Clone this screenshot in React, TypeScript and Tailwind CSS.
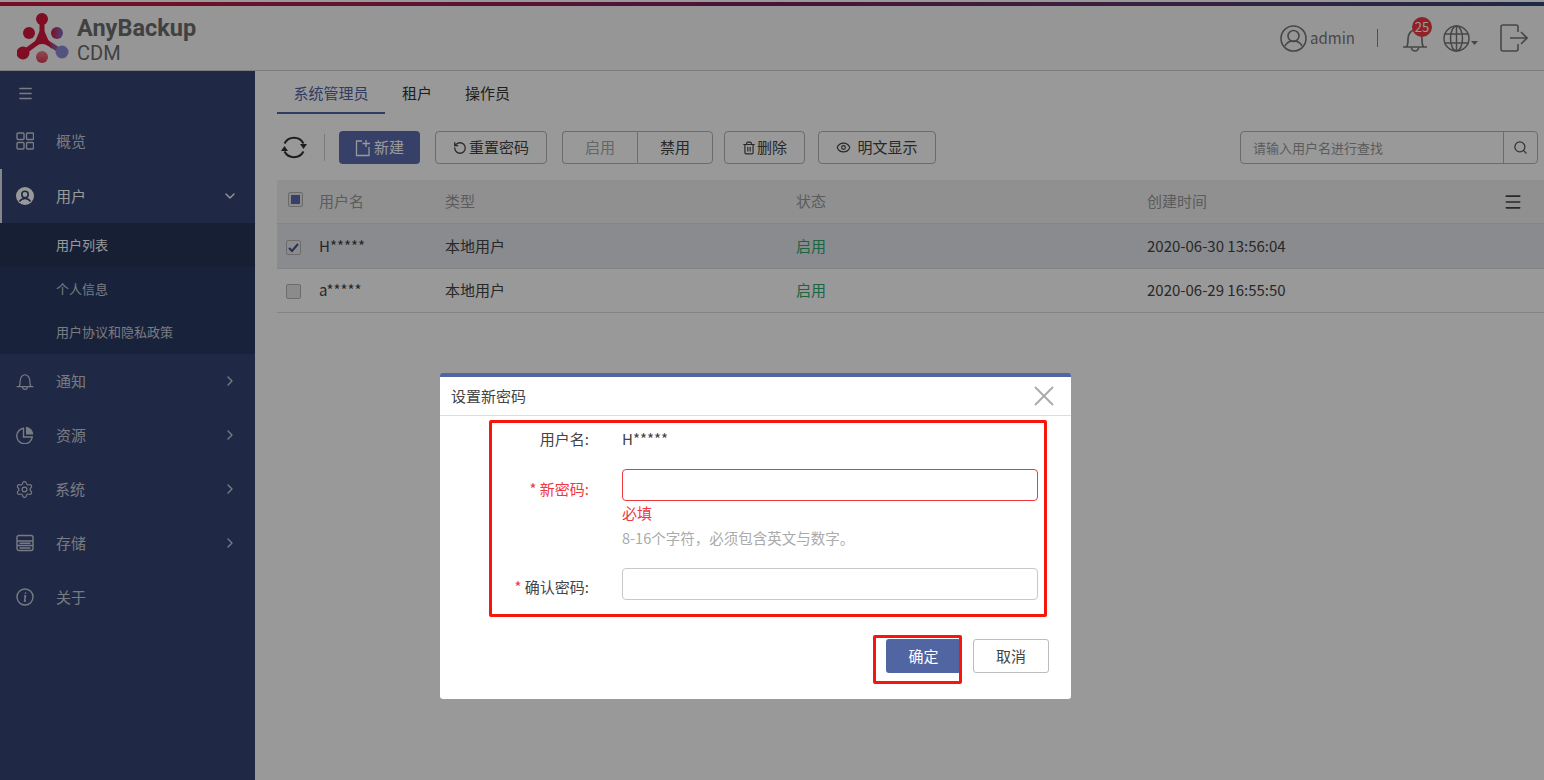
import { ChevronDown, ChevronRight, Eye, Menu, RotateCcw, Search, Settings, Trash2 } from "lucide-react";

const cjk = "font-['Noto_Sans_CJK_SC','Noto_Sans',sans-serif]";

function BellIcon({ size }: { size: number }) {
  return (
    <svg width={size} height={size} viewBox="0 0 26 26" fill="none" stroke="currentColor" strokeWidth="1.7">
      <path d="M1 21h24M4.500 21c1.500-2 1.500-4 1.500-8 0-5 3-9 7-9s7 4 7 9c0 4 0 6 1.500 8" />
      <path d="M9.500 21.500a3.500 3.500 0 0 0 7 0" />
    </svg>
  );
}

function PieIcon() {
  return (
    <svg width="18" height="18" viewBox="0 0 18 18" fill="none" stroke="currentColor" strokeWidth="1.4">
      <path d="M7.500 2.200A7.800 7.800 0 1 0 16.300 11H7.500z" />
      <path d="M10 0.800A8 8 0 0 1 17.200 8.500H10z" fill="currentColor" stroke="none" />
    </svg>
  );
}

const menus = [
  { name: "通知", icon: <BellIcon size={18} /> },
  { name: "资源", icon: <PieIcon /> },
  { name: "系统", icon: <Settings size={19} strokeWidth={1.5} className="-ml-px -mr-px" /> },
  { name: "存储", icon: <StorageIcon /> },
];

function StorageIcon() {
  return (
    <svg width="18" height="18" viewBox="0 0 18 18" fill="none" stroke="currentColor" strokeWidth="1.4">
      <rect x="1" y="1.500" width="16" height="15" rx="2" />
      <path d="M1 7h16M1 11.500h16M3.500 9.200h11M3.500 14h11" />
    </svg>
  );
}

function Logo() {
  return (
    <svg className="mt-[4px]" width="54" height="54" viewBox="0 0 54 54">
      <defs>
        <linearGradient id="lg-r" x1="0" y1="0" x2="1" y2="0">
          <stop offset="0" stopColor="#d4163c" />
          <stop offset="1" stopColor="#7d73c9" />
        </linearGradient>
        <linearGradient id="lg-b" x1="0" y1="0" x2="0" y2="1">
          <stop offset="0" stopColor="#ee7d8c" />
          <stop offset="1" stopColor="#d93a58" />
        </linearGradient>
      </defs>
      <path d="M25 6 L25 26 L6 40" stroke="#d4163c" strokeWidth="5" fill="none" />
      <path d="M25 26 L45 39" stroke="url(#lg-r)" strokeWidth="5" fill="none" />
      <path d="M15 36 Q24 14 25 14 Q26 14 35 36 Q25 26 15 36 Z" fill="#d4163c" />
      <circle cx="25" cy="6" r="6" fill="#d4163c" />
      <circle cx="12" cy="20" r="6" fill="#d4163c" />
      <circle cx="40" cy="20" r="6" fill="url(#lg-r)" />
      <circle cx="6" cy="40" r="6.500" fill="#d4163c" />
      <circle cx="25" cy="44" r="6" fill="url(#lg-b)" />
      <circle cx="45" cy="39" r="6.500" fill="#8a8ad6" />
    </svg>
  );
}

function Sidebar() {
  return (
    <aside className="flex w-[255px] shrink-0 flex-col bg-[#344574] text-[15px] text-[#c9cdd8]">
      <div className="flex h-[44px] items-center pl-[17px]">
        <Menu size={17} strokeWidth={2} />
      </div>
      <div className="flex h-[54px] items-center pb-[2px] pl-[16px]">
        <svg width="18" height="18" viewBox="0 0 18 18" fill="none" stroke="currentColor" strokeWidth="1.4">
          <rect x="1" y="1" width="7" height="6.500" rx="1" />
          <rect x="10.500" y="1" width="7" height="6.500" rx="1" />
          <rect x="1" y="10.500" width="7" height="6.500" rx="1" />
          <rect x="10.500" y="10.500" width="7" height="6.500" rx="1" />
        </svg>
        <span className="ml-[22px]">概览</span>
      </div>
      <div className="flex h-[54px] items-center border-l-2 border-[#dfe2ea] pl-[14px] pr-[17px] text-white">
        <svg width="18" height="18" viewBox="0 0 18 18">
          <circle cx="9" cy="9" r="9" fill="currentColor" />
          <circle cx="9" cy="7.500" r="3.200" fill="none" stroke="#344574" strokeWidth="1.600" />
          <path d="M3.500 14.500c1.500-2.500 3.500-3 5.500-3s4 .5 5.500 3" fill="none" stroke="#344574" strokeWidth="1.600" />
        </svg>
        <span className="ml-[22px]">用户</span>
        <ChevronDown size={16} className="ml-auto" />
      </div>
      <div className="bg-[#2b3a63] text-[13px]">
        <div className="flex h-[44px] items-center bg-[#263457] pl-[56px] text-white">用户列表</div>
        <div className="flex h-[43px] items-center pl-[56px]">个人信息</div>
        <div className="flex h-[44px] items-center pb-[1px] pl-[56px]">用户协议和隐私政策</div>
      </div>
      {menus.map((m) => (
        <div key={m.name} className="flex h-[54px] items-center pl-[16px] pr-[17px]">
          {m.icon}
          <span className="ml-[22px]">{m.name}</span>
          <ChevronRight size={16} className="ml-auto" />
        </div>
      ))}
      <div className="flex h-[54px] items-center pl-[16px]">
        <svg width="18" height="18" viewBox="0 0 18 18" fill="none" stroke="currentColor" strokeWidth="1.400">
          <circle cx="9" cy="9" r="8" />
          <path d="M9.500 4.500v1.500M8 8h1.500L8.500 13H10" />
        </svg>
        <span className="ml-[22px]">关于</span>
      </div>
    </aside>
  );
}

function TopBar() {
  return (
    <header className="flex h-[65px] items-center border-b border-[#d0d0d0] bg-[#fbfbfb] pl-[17px] pr-[16px]">
      <Logo />
      <div className="ml-[6px] mt-[4px] flex flex-col font-['Roboto',sans-serif] text-[#6d6d6d]">
        <span className="text-[23.5px] leading-[26px] font-bold">AnyBackup</span>
        <span className="text-[20px] leading-[24px]">CDM</span>
      </div>
      <div className="ml-auto flex items-center text-[#777]">
        <svg width="27" height="27" viewBox="0 0 27 27" fill="none" stroke="currentColor" strokeWidth="1.600">
          <circle cx="13.500" cy="13.500" r="12.500" />
          <circle cx="13.500" cy="11" r="5.500" />
          <path d="M5 21c2-4 5-5 8.500-5s6.500 1 8.500 5" />
        </svg>
        <span className={`ml-[3px] text-[15px] ${cjk}`}>admin</span>
        <div className="ml-[22px] h-[18px] w-px bg-[#888]" />
        <div className="relative ml-[24px] mt-[2px]">
          <BellIcon size={26} />
          <span className={`absolute -top-[9px] left-[10px] flex h-[20px] w-[20px] items-center justify-center rounded-full bg-[#f0383f] text-[13px] text-white ${cjk}`}>25</span>
        </div>
        <svg className="ml-[15px]" width="27" height="27" viewBox="0 0 27 27" fill="none" stroke="currentColor" strokeWidth="1.500">
          <circle cx="13.500" cy="13.500" r="12.500" />
          <ellipse cx="13.500" cy="13.500" rx="6" ry="12.500" />
          <path d="M13.500 1v25M2 9h23M2 18h23" />
        </svg>
        <svg className="mt-[10px]" width="9" height="5" viewBox="0 0 9 5"><path d="M1 0h7L4.500 4z" fill="currentColor" /></svg>
        <svg className="ml-[21px]" width="28" height="28" viewBox="0 0 28 28" fill="none" stroke="currentColor" strokeWidth="1.600">
          <path d="M18 8V3a2 2 0 0 0-2-2H3a2 2 0 0 0-2 2v22a2 2 0 0 0 2 2h13a2 2 0 0 0 2-2v-5" />
          <path d="M10 14h17M21 8l6 6-6 6" />
        </svg>
      </div>
    </header>
  );
}

function Btn({ children, className = "" }: { children: React.ReactNode; className?: string }) {
  return (
    <button className={`flex h-[33px] items-center justify-center rounded-[4px] border border-[#b4b4b4] bg-white text-[15px] text-[#444] ${className}`}>
      {children}
    </button>
  );
}

function SyncIcon() {
  return (
    <svg className="ml-[4px] text-[#333]" width="26" height="27" viewBox="0 0 26 27" fill="none" stroke="currentColor" strokeWidth="2">
      <path d="M3.500 9.500A10.800 10.800 0 0 1 22.500 9.500" />
      <path d="M22.500 17.500A10.800 10.800 0 0 1 3.500 17.500" />
      <path d="M19 10h7l-3.500 5z" fill="currentColor" stroke="none" />
      <path d="M0 17h7l-3.500-5z" fill="currentColor" stroke="none" />
    </svg>
  );
}

function Toolbar() {
  return (
    <div className="mt-[17px] flex items-center">
      <SyncIcon />
      <div className="ml-[17px] h-[27px] w-px bg-[#ccc]" />
      <button className="ml-[14px] flex h-[33px] w-[81px] items-center justify-center rounded-[4px] bg-[#5a6cb0] text-[15px] text-white">
        <svg className="mr-[3px]" width="16" height="18" viewBox="0 0 16 18" fill="none" stroke="currentColor" strokeWidth="1.300">
          <path d="M7 2H1.500v14.500h12.500V8M11 1v7M7.500 4.500h7.500" />
        </svg>
        新建
      </button>
      <Btn className="ml-[15px] w-[112px]">
        <RotateCcw size={14} strokeWidth={2.200} className="mr-[2px]" />
        重置密码
      </Btn>
      <div className="ml-[15px] flex">
        <Btn className="w-[75px] rounded-r-none border-r-0 bg-[#e9e9e9] text-[#aaa]">启用</Btn>
        <Btn className="w-[76px] rounded-l-none">禁用</Btn>
      </div>
      <Btn className="ml-[11px] w-[81px]">
        <Trash2 size={14} strokeWidth={2} className="mr-[1px]" />
        删除
      </Btn>
      <Btn className="ml-[13px] w-[118px]">
        <Eye size={15} strokeWidth={1.800} className="mr-[6px]" />
        明文显示
      </Btn>
      <div className="ml-auto mr-[6px] flex h-[33px] w-[298px] rounded-[4px] border border-[#b4b4b4] bg-white">
        <span className="flex flex-1 items-center pl-[12px] text-[13px] text-[#999]">请输入用户名进行查找</span>
        <span className="flex w-[34px] items-center justify-center border-l border-[#b4b4b4] text-[#555]">
          <Search size={15} />
        </span>
      </div>
    </div>
  );
}

const rows = [
  { name: "H", time: "2020-06-30 13:56:04", checked: true },
  { name: "a", time: "2020-06-29 16:55:50", checked: false },
];

function Table() {
  return (
    <div className="mt-[16px] text-[15px]">
      <div className="flex h-[44px] items-center border-b border-[#dcdcdc] bg-[#f0f0f0] text-[#999]">
        <div className="w-[42px] pl-[11px]">
          <span className="mb-[4px] flex h-[15px] w-[15px] items-center justify-center rounded-[2px] border border-[#b4b4b4] bg-[#e8e8e8]">
            <span className="h-[9px] w-[9px] bg-[#5a6cb0]" />
          </span>
        </div>
        <div className="w-[126px]">用户名</div>
        <div className="w-[351px]">类型</div>
        <div className="w-[351px]">状态</div>
        <div className="flex-1">创建时间</div>
        <Menu size={20} className="mr-[21px] text-[#444]" />
      </div>
      {rows.map((r) => (
        <div key={r.name} className={`flex items-center border-b border-[#dcdcdc] text-[#444] ${r.checked ? "h-[45px] bg-[#e6e8ee]" : "h-[44px] bg-white"}`}>
          <div className="w-[42px] pl-[9px]">
            <span className="mt-[2px] flex h-[15px] w-[15px] items-center justify-center rounded-[2px] border border-[#b4b4b4] bg-[#e8e8e8]">
              {r.checked && (
                <svg width="13" height="13" viewBox="0 0 13 13" fill="none" stroke="#41528c" strokeWidth="2">
                  <path d="M2 7l3 3 6-7" />
                </svg>
              )}
            </span>
          </div>
          <div className="w-[126px]">{r.name}*****</div>
          <div className="w-[351px]">本地用户</div>
          <div className="w-[351px] text-[#2fa86c]">启用</div>
          <div className="flex-1">{r.time}</div>
        </div>
      ))}
    </div>
  );
}

function Modal() {
  return (
    <div className={`absolute left-[440px] top-[373px] h-[326px] w-[631px] rounded-[3px] border-t-4 border-[#5265a3] bg-white text-[15px] text-[#444] ${cjk}`}>
      <div className="flex h-[39px] items-center justify-between border-b border-[#ddd] pl-[11px] pr-[17px]">
        <span>设置新密码</span>
        <svg width="20" height="20" viewBox="0 0 20 20" fill="none" stroke="#a8a8a8" strokeWidth="1.800">
          <path d="M1 1l18 18M19 1L1 19" />
        </svg>
      </div>
      <div className="pl-[149px] pr-[33px]">
        <div className="flex h-[47px] items-center">
          <span className="-ml-[150px] w-[150px] text-right">用户名:</span>
          <span className="ml-[33px]">H*****</span>
        </div>
        <div className="flex pt-[6px]">
          <span className="-ml-[150px] w-[150px] pt-[9px] text-right text-[#f0383f]">* 新密码:</span>
          <div className="ml-[33px] flex-1">
            <div className="h-[32px] rounded-[4px] border border-[#f0383f]" />
            <div className="leading-[24px] text-[#f0383f]">必填</div>
            <div className="mt-[1px] text-[14.5px] leading-[24px] text-[#aaa]">8-16个字符，必须包含英文与数字。</div>
          </div>
        </div>
        <div className="mt-[18px] flex">
          <span className="-ml-[150px] w-[150px] pt-[8px] text-right"><span className="text-[#f0383f]">* </span>确认密码:</span>
          <div className="ml-[33px] h-[32px] flex-1 rounded-[4px] border border-[#c8c8c8]" />
        </div>
      </div>
      <div className="mt-[39px] flex justify-end gap-[12px] pr-[22px]">
        <button className="h-[34px] w-[75px] rounded-[3px] bg-[#5265a3] text-white">确定</button>
        <button className="h-[34px] w-[76px] rounded-[3px] border border-[#bdbdbd] bg-white">取消</button>
      </div>
    </div>
  );
}

export default function App() {
  return (
    <div className={`relative h-[780px] w-[1544px] overflow-hidden bg-white ${cjk}`}>
      <div className="h-[2px] bg-white" />
      <div className="h-[4px] bg-gradient-to-r from-[#c8143c] via-[#7a1f5e] to-[#344574]" />
      <TopBar />
      <div className="flex h-[709px]">
        <Sidebar />
        <main className="flex-1 pl-[22px]">
          <div className="flex h-[43px] pt-[3px] text-[15px] text-[#333]">
            <div className="flex w-[108px] items-center justify-center border-b-2 border-[#5265a3] text-[#5265a3]">系统管理员</div>
            <div className="ml-[17px] flex items-center pb-[2px]">租户</div>
            <div className="ml-[33px] flex items-center pb-[2px]">操作员</div>
          </div>
          <Toolbar />
          <Table />
        </main>
      </div>
      <div className="absolute inset-0 bg-black/40" />
      <Modal />
      <div className="absolute left-[489px] top-[420px] h-[197px] w-[558px] rounded-[2px] border-[3px] border-[#f5160c]" />
      <div className="absolute left-[873px] top-[635px] h-[49px] w-[89px] rounded-[2px] border-[3px] border-[#f5160c]" />
    </div>
  );
}
